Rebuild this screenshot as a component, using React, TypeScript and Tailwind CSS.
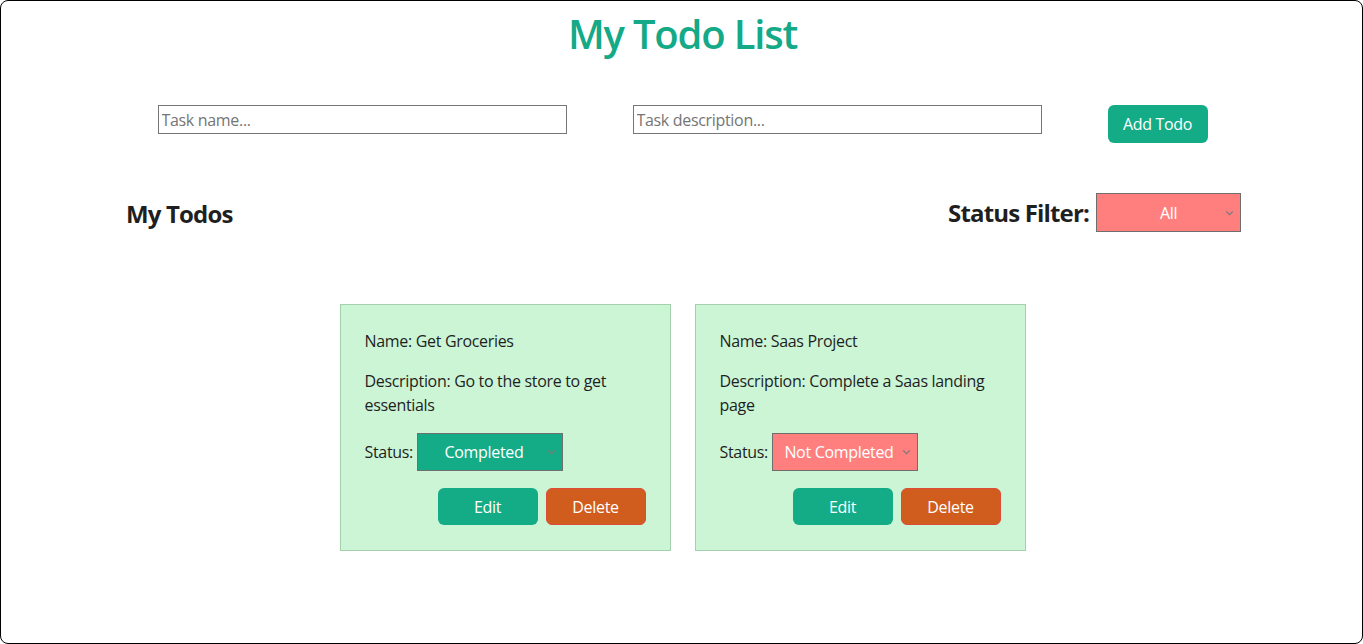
import { useState } from "react";

type Todo = {
  id: number;
  name: string;
  description: string;
  status: "Completed" | "Not Completed";
};

const initialTodos: Todo[] = [
  { id: 1, name: "Get Groceries", description: "Go to the store to get essentials", status: "Completed" },
  { id: 2, name: "Saas Project", description: "Complete a Saas landing page", status: "Not Completed" },
];

const Chevron = () => (
  <svg
    className="pointer-events-none absolute right-[6px] top-1/2 -translate-y-1/2"
    width="11"
    height="11"
    viewBox="0 0 10 10"
    fill="none"
  >
    <path d="M2 3.5 L5 6.5 L8 3.5" stroke="#7a7a7a" strokeWidth="1.2" />
  </svg>
);

const TodoCard = ({ todo }: { todo: Todo }) => {
  const done = todo.status === "Completed";
  return (
    <div className="w-[331px] bg-[#ccf5d6] border border-[#a3d1ab] px-6 pt-6 pb-[25px] text-[#1f1f1f]">
      <p className="leading-6">Name: {todo.name}</p>
      <p className="leading-6 mt-4">Description: {todo.description}</p>
      <div className="flex items-center mt-4">
        <span className="leading-6">Status:</span>
        <div className="relative ml-[4px]">
          <select
            defaultValue={todo.status}
            className={`appearance-none w-[146px] h-[38px] border border-[#6f6f6f] text-white text-center pr-3 outline-none ${
              done ? "bg-[#13ac87]" : "bg-[#ff7f7f]"
            }`}
          >
            <option>Completed</option>
            <option>Not Completed</option>
          </select>
          <Chevron />
        </div>
      </div>
      <div className="flex justify-end gap-2 mt-[17px]">
        <button className="w-[100px] h-[37px] rounded-md bg-[#13ac87] text-white">Edit</button>
        <button className="w-[100px] h-[37px] rounded-md bg-[#d05d1d] border border-[#dd4b3c] text-white">
          Delete
        </button>
      </div>
    </div>
  );
};

export default function App() {
  const [todos] = useState<Todo[]>(initialTodos);

  return (
    <div
      className="h-[644px] bg-white border border-black rounded-lg overflow-hidden text-base tracking-[-0.02em]"
      style={{ fontFamily: '"Open Sans", "Noto Sans", sans-serif' }}
    >
      <h1 className="text-center text-[40px] leading-[1.2] font-semibold text-[#14a987] pt-[9px] pl-[2px] tracking-[-0.03em]">
        My Todo List
      </h1>

      <div className="flex justify-center items-start gap-[66px] mt-[47px] pl-[2px]">
        <input
          placeholder="Task name..."
          className="w-[409px] h-[29px] border border-[#767676] px-[3px] placeholder:text-[#757575] outline-none"
        />
        <input
          placeholder="Task description..."
          className="w-[409px] h-[29px] border border-[#767676] px-[3px] placeholder:text-[#757575] outline-none"
        />
        <button className="w-[100px] h-[38px] rounded-md bg-[#13ac87] text-white">Add Todo</button>
      </div>

      <div className="flex justify-between items-center pl-[125px] pr-[121px] mt-[50px]">
        <h2 className="text-2xl font-bold text-[#1f1f1f] mt-[3px] tracking-[-0.035em]">My Todos</h2>
        <div className="flex items-center gap-[7px]">
          <span className="text-2xl font-bold text-[#1f1f1f] tracking-[-0.035em]">Status Filter:</span>
          <div className="relative">
            <select className="appearance-none w-[145px] h-[39px] bg-[#ff7f7f] border border-[#6f6f6f] text-white text-center outline-none">
              <option>All</option>
              <option>Completed</option>
              <option>Not Completed</option>
            </select>
            <Chevron />
          </div>
        </div>
      </div>

      <div className="flex justify-center gap-6 mt-[72px] pl-[2px]">
        {todos.map((t) => (
          <TodoCard key={t.id} todo={t} />
        ))}
      </div>
    </div>
  );
}
